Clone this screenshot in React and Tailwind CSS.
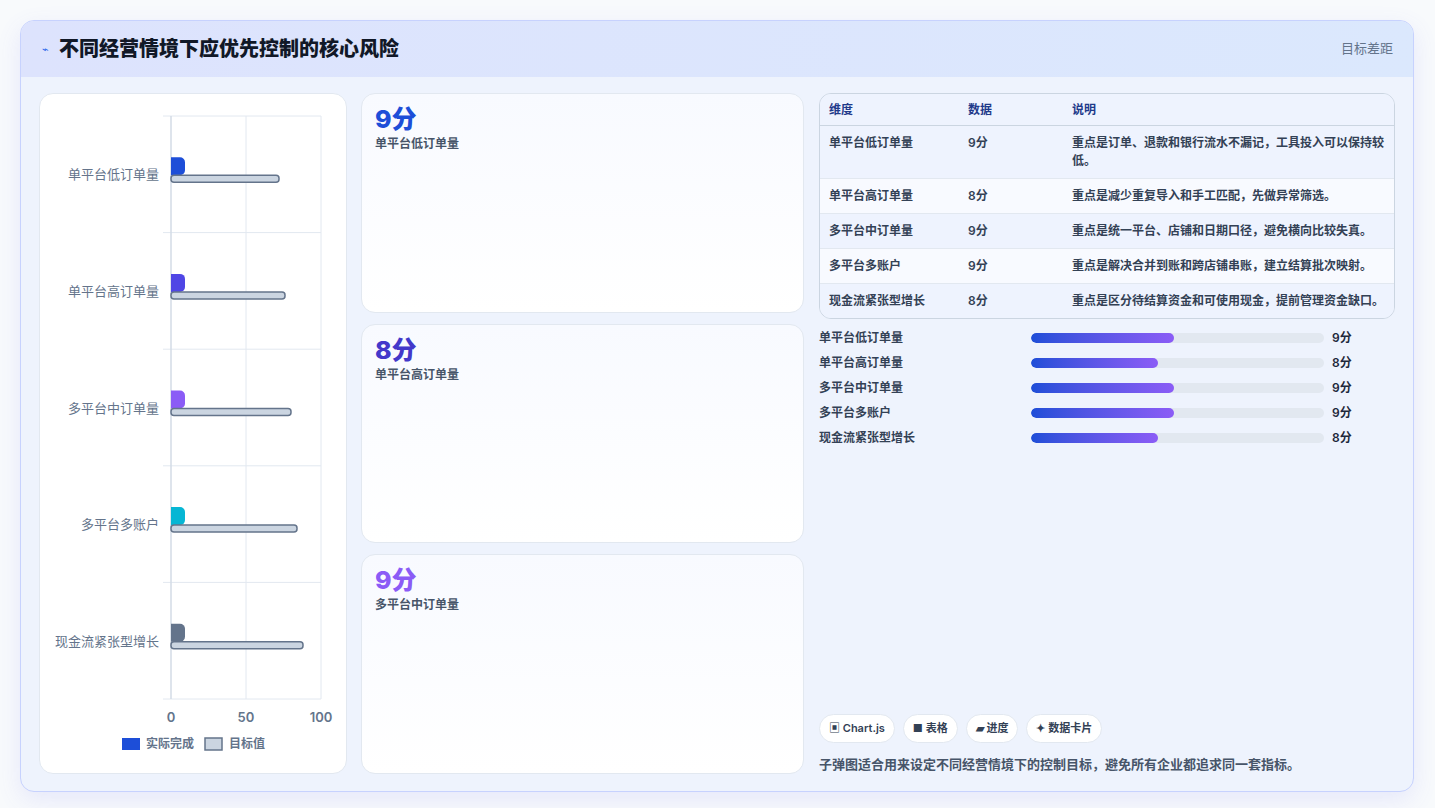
import React from "react";

const cats = ["单平台低订单量", "单平台高订单量", "多平台中订单量", "多平台多账户", "现金流紧张型增长"];
const actualColors = ["#1d4ed8", "#4f46e5", "#8b5cf6", "#06b6d4", "#64748b"];
const targets = [72, 76, 80, 84, 88];
const rows = [
  ["单平台低订单量", "9分", "重点是订单、退款和银行流水不漏记，工具投入可以保持较低。"],
  ["单平台高订单量", "8分", "重点是减少重复导入和手工匹配，先做异常筛选。"],
  ["多平台中订单量", "9分", "重点是统一平台、店铺和日期口径，避免横向比较失真。"],
  ["多平台多账户", "9分", "重点是解决合并到账和跨店铺串账，建立结算批次映射。"],
  ["现金流紧张型增长", "8分", "重点是区分待结算资金和可使用现金，提前管理资金缺口。"],
];
const prog = [["单平台低订单量", 9], ["单平台高订单量", 8], ["多平台中订单量", 9], ["多平台多账户", 9], ["现金流紧张型增长", 8]];

function Chart() {
  const x0 = 131, w = 150, y0 = 22, h = 583, band = h / 5;
  return (
    <svg width="307" height="679" className="block">
      {[0, 50, 100].map((v) => (
        <line key={v} x1={x0 + (w * v) / 100} x2={x0 + (w * v) / 100} y1={y0} y2={y0 + h} stroke="#e2e8f0" />
      ))}
      {[0, 1, 2, 3, 4, 5].map((i) => (
        <line key={i} x1={x0 - 8} x2={x0 + w} y1={y0 + band * i} y2={y0 + band * i} stroke="#e2e8f0" />
      ))}
      <line x1={x0} x2={x0} y1={y0} y2={y0 + h} stroke="#cbd5e1" />
      {cats.map((c, i) => {
        const cy = y0 + band * i + band / 2;
        return (
          <g key={c}>
            <text x={x0 - 12} y={cy + 5} textAnchor="end" fontSize="13" fill="#64748b">{c}</text>
            <path d={`M${x0} ${cy - 17} h9 a5 5 0 0 1 5 5 v8 a5 5 0 0 1 -5 5 h-9 z`} fill={actualColors[i]} />
            <rect x={x0} y={cy + 1} width={(w * targets[i]) / 100} height={7} rx={3} fill="#cbd5e1" stroke="#64748b" strokeWidth="1.5" />
          </g>
        );
      })}
      {[0, 50, 100].map((v) => (
        <text key={v} x={x0 + (w * v) / 100} y={y0 + h + 23} textAnchor="middle" fontSize="13" fontWeight="600" fill="#64748b">{v}</text>
      ))}
      <rect x={82} y={644} width={18} height={12} fill="#1d4ed8" />
      <text x={106} y={654} fontSize="12" fill="#64748b" fontWeight="600">实际完成</text>
      <rect x={165} y={644} width={17} height={12} fill="#cbd5e1" stroke="#64748b" strokeWidth="1.5" />
      <text x={189} y={654} fontSize="12" fill="#64748b" fontWeight="600">目标值</text>
    </svg>
  );
}

export default function App() {
  return (
    <div className="w-[1435px] h-[808px] bg-[#f8fafc] p-[20px] pr-[21px] pb-[16px]" style={{ fontFamily: "Inter, 'Noto Sans CJK SC', sans-serif" }}>
      <div className="h-full rounded-[14px] border border-[#c7d2fe] bg-[#eef3fd] shadow-[0_8px_24px_rgba(99,102,241,0.12)] overflow-hidden flex flex-col">
        <div className="h-[56px] shrink-0 bg-gradient-to-r from-[#dde3fd] to-[#dbe8fd] flex items-center justify-between pl-[21px] pr-[20px]">
          <div className="flex items-center gap-[10px]">
            <span className="text-[#2563eb] text-[11px]">⌁</span>
            <span className="text-[20px] font-extrabold text-[#111827]">不同经营情境下应优先控制的核心风险</span>
          </div>
          <span className="text-[13px] text-[#64748b]">目标差距</span>
        </div>
        <div className="flex-1 flex gap-[14px] pl-[18px] pr-[18px] pt-[16px] pb-[18px]">
          <div className="w-[308px] bg-white rounded-[14px] border border-[#e2e8f0] overflow-hidden">
            <Chart />
          </div>
          <div className="w-[443px] flex flex-col gap-[11px]">
            {[["9分", "#1d4ed8", "单平台低订单量"], ["8分", "#4338ca", "单平台高订单量"], ["9分", "#8b5cf6", "多平台中订单量"]].map(([v, c, l], i) => (
              <div key={i} className="flex-1 rounded-[14px] border border-[#e2e8f0] bg-gradient-to-b from-[#f8faff] to-white px-[13px] pt-[9px]">
                <div className="text-[25px] font-extrabold leading-[32px]" style={{ color: c }}>{v}</div>
                <div className="text-[12px] text-[#475569] font-semibold">{l}</div>
              </div>
            ))}
          </div>
          <div className="flex-1 flex flex-col ml-[1px]">
            <div className="rounded-[12px] border border-[#cbd5e1] overflow-hidden text-[12px] font-semibold text-[#334155]">
              <div className="flex h-[32px] items-center bg-[#eef3fe] border-b border-[#cbd5e1] text-[#1e3a8a]">
                <div className="w-[148px] pl-[9px]">维度</div><div className="w-[104px]">数据</div><div className="flex-1">说明</div>
              </div>
              {rows.map((r, i) => (
                <div key={i} className={`flex py-[8px] border-b border-[#e2e8f0] last:border-b-0 ${i % 2 ? "bg-[#f8faff]" : "bg-[#eef3fe]"}`}>
                  <div className="w-[148px] pl-[9px] leading-[18px]">{r[0]}</div>
                  <div className="w-[104px] leading-[18px]">{r[1]}</div>
                  <div className="flex-1 pr-[10px] leading-[18px]">{r[2]}</div>
                </div>
              ))}
            </div>
            <div className="mt-[10px] flex flex-col gap-[7px]">
              {prog.map(([l, v], i) => (
                <div key={i} className="flex items-center h-[18px] text-[12px] font-semibold text-[#334155]">
                  <div className="w-[212px]">{l}</div>
                  <div className="w-[293px] h-[10px] rounded-full bg-[#e2e8f0] overflow-hidden">
                    <div className="h-full rounded-full bg-gradient-to-r from-[#1d4ed8] to-[#8b5cf6]" style={{ width: `${(v / 18.4) * 100}%` }} />
                  </div>
                  <div className="ml-[8px] text-[#1e293b]">{v}分</div>
                </div>
              ))}
            </div>
            <div className="mt-auto flex gap-[8px]">
              {["▣ Chart.js", "■ 表格", "▰ 进度", "✦ 数据卡片"].map((t) => (
                <span key={t} className="h-[29px] px-[9px] flex items-center rounded-full bg-white border border-[#e2e8f0] text-[11px] font-semibold text-[#334155]">{t}</span>
              ))}
            </div>
            <div className="mt-[12px] text-[13px] text-[#475569] font-semibold">子弹图适合用来设定不同经营情境下的控制目标，避免所有企业都追求同一套指标。</div>
          </div>
        </div>
      </div>
    </div>
  );
}
